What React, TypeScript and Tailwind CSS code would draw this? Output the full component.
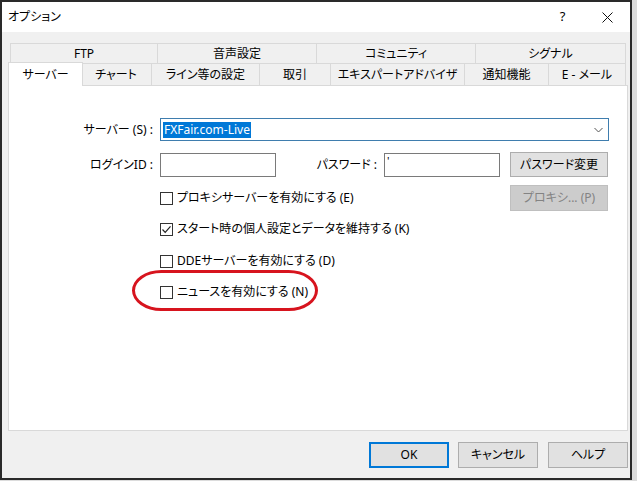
import React from "react";

const F = "font-['Noto_Sans','Noto_Sans_CJK_JP',sans-serif] [font-feature-settings:'palt']";

function Checkbox({ checked }: { checked?: boolean }) {
  return (
    <div className="w-[13px] h-[13px] border border-[#333333] bg-white flex items-center justify-center shrink-0">
      {checked && (
        <svg width="11" height="11" viewBox="0 0 11 11">
          <path d="M1.5 5.5 L4.2 8.3 L9.5 2.3" fill="none" stroke="#222" strokeWidth="1.2" />
        </svg>
      )}
    </div>
  );
}

function CheckRow({ label, checked }: { label: string; checked?: boolean }) {
  return (
    <div className="flex items-center gap-[4px] h-[16px]">
      <Checkbox checked={checked} />
      <span className="text-[12px] leading-[16px] text-black whitespace-nowrap">{label}</span>
    </div>
  );
}

export default function App() {
  const row1 = [
    { t: "FTP", w: 148 },
    { t: "音声設定", w: 159 },
    { t: "コミュニティ", w: 159 },
    { t: "シグナル", w: 150 },
  ];
  const row2 = [
    { t: "チャート", w: 71 },
    { t: "ライン等の設定", w: 108 },
    { t: "取引", w: 71 },
    { t: "エキスパートアドバイザ", w: 134 },
    { t: "通知機能", w: 84 },
    { t: "E - メール", w: 77 },
  ];
  return (
    <div className={`w-[637px] h-[481px] bg-[#dcdcdc] overflow-hidden ${F}`}>
      <div className="w-[632px] h-[480px] border-2 border-[#2a2a2a] bg-[#f0f0f0] flex flex-col">
        {/* title bar */}
        <div className="h-[30px] bg-white flex items-center shrink-0">
          <span className="ml-[6px] text-[12px] leading-[16px] text-black">オプション</span>
          <div className="ml-auto flex h-full">
            <div className="w-[45px] h-full flex items-center justify-center text-[13px] text-black">?</div>
            <div className="w-[45px] h-full flex items-center justify-center">
              <svg width="11" height="11" viewBox="0 0 11 11">
                <path d="M0.5 0.5 L10.5 10.5 M10.5 0.5 L0.5 10.5" stroke="#111" strokeWidth="1" />
              </svg>
            </div>
          </div>
        </div>

        {/* tabs */}
        <div className="mt-[11px] ml-[8px] flex flex-col">
          <div className="flex h-[21px]">
            {row1.map((r, i) => (
              <div
                key={r.t}
                style={{ width: r.w }}
                className={`h-[21px] border-t border-b border-r border-[#d9d9d9] ${i === 0 ? "border-l" : ""} flex items-center justify-center text-[12px] text-black`}
              >
                {r.t}
              </div>
            ))}
          </div>
          <div className="flex h-[21px]">
            <div className="relative z-10 w-[75px] h-[24px] -ml-[2px] -mr-[2px] -mt-[2px] bg-white border-l border-t border-r border-[#d9d9d9] flex items-center justify-center text-[12px] text-black">
              サーバー
            </div>
            {row2.map((r) => (
              <div
                key={r.t}
                style={{ width: r.w }}
                className="h-[21px] border-r border-[#d9d9d9] flex items-center justify-center text-[12px] text-black whitespace-pre"
              >
                {r.t}
              </div>
            ))}
          </div>
        </div>

        {/* panel */}
        <div className="ml-[6px] w-[620px] h-[346px] bg-white border border-[#d9d9d9] flex flex-col shrink-0">
          <div className="mt-[32px] flex items-center h-[23px]">
            <div className="w-[144px] text-right text-[12px] text-black">サーバー (S) :</div>
            <div className="ml-[7px] w-[449px] h-[23px] border border-[#3f7dae] flex items-center">
              <span className="ml-[2px] px-[1px] bg-[#0078d7] text-white text-[12px] leading-[16px]">FXFair.com-Live</span>
              <svg className="ml-auto mr-[5px]" width="9" height="6" viewBox="0 0 9 6">
                <path d="M0.5 1 L4.5 5 L8.5 1" fill="none" stroke="#555" strokeWidth="1" />
              </svg>
            </div>
          </div>

          <div className="mt-[11px] flex items-center h-[25px]">
            <div className="w-[144px] text-right text-[12px] text-black">ログインID :</div>
            <div className="ml-[7px] w-[116px] h-[24px] border border-[#7a7a7a] bg-white" />
            <div className="w-[101px] text-right text-[12px] text-black">パスワード :</div>
            <div className="ml-[7px] w-[116px] h-[24px] border border-[#7a7a7a] bg-white flex items-start">
              <span className="ml-[2px] text-[11px] leading-[14px] text-black">'</span>
            </div>
            <div className="ml-[10px] w-[98px] h-[25px] bg-[#e1e1e1] border border-[#adadad] flex items-center justify-center text-[12px] text-black">
              パスワード変更
            </div>
          </div>

          <div className="mt-[8px] flex items-center h-[26px]">
            <div className="ml-[151px] w-[350px]">
              <CheckRow label="プロキシサーバーを有効にする (E)" />
            </div>
            <div className="w-[98px] h-[26px] bg-[#cccccc] border border-[#bfbfbf] flex items-center justify-center text-[12px] text-[#838383]">
              プロキシ... (P)
            </div>
          </div>

          <div className="mt-[10px] ml-[151px]">
            <CheckRow label="スタート時の個人設定とデータを維持する (K)" checked />
          </div>
          <div className="mt-[16px] ml-[151px]">
            <CheckRow label="DDEサーバーを有効にする (D)" />
          </div>
          <div className="mt-[15px] ml-[151px] relative">
            <CheckRow label="ニュースを有効にする (N)" />
            <div className="absolute left-[-28px] top-[-14px] w-[186px] h-[41px] border-[3px] border-[#d7141e] rounded-[30px/21px]" />
          </div>
        </div>

        {/* buttons */}
        <div className="mt-[11px] flex justify-end pr-[2px] gap-[9px]">
          <div className="w-[80px] h-[26px] bg-[#e1e1e1] border-2 border-[#0078d7] flex items-center justify-center text-[12px] text-black">
            OK
          </div>
          <div className="w-[80px] h-[26px] bg-[#e1e1e1] border border-[#adadad] flex items-center justify-center text-[12px] text-black">
            キャンセル
          </div>
          <div className="ml-[1px] w-[80px] h-[26px] bg-[#e1e1e1] border border-[#adadad] flex items-center justify-center text-[12px] text-black">
            ヘルプ
          </div>
        </div>
      </div>
    </div>
  );
}
